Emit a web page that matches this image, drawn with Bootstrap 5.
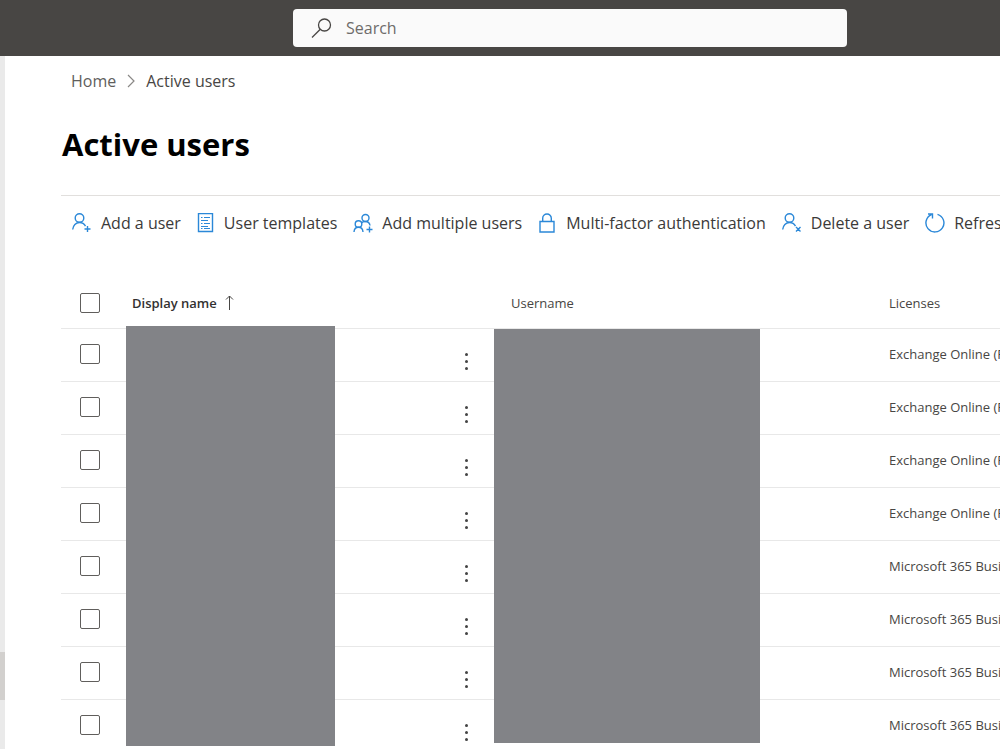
<!DOCTYPE html>
<html lang="en">
<head>
<meta charset="utf-8">
<meta name="viewport" content="width=device-width, initial-scale=1">
<title>Active users</title>
<link href="https://cdn.jsdelivr.net/npm/bootstrap@5.3.0/dist/css/bootstrap.min.css" rel="stylesheet">
<style>
  body { font-family: "Open Sans", "Noto Sans", sans-serif; font-size: 16px; line-height: 24px; color: #484644; background: #fff; }
  .topbar { background: #484644; height: 56px; }
  .search-box { flex: 0 0 554px; height: 38px; background: #fafafa; border-radius: 4px; color: #605e5c; padding: 0 18px; gap: 14px; }
  .search-box input { color: #605e5c; font-size: 16px; }
  .search-box input::placeholder { color: #6e6c6a; }
  .search-lead { flex: 0 1 293px; }
  .side-rail { flex: 0 0 5px; background: #eaeaea; }
  .rail-thumb { height: 48px; margin-top: 596px; background: #d2d0ce; }
  .page { padding: 13px 0 0 56px; min-width: 0; }
  .trail { --bs-breadcrumb-item-padding-x: 0; gap: 10px; padding-left: 10px; margin-bottom: 29px; }
  .trail a { color: #605e5c; }
  .trail .active { color: #484644; }
  .page-title { font-size: 31px; line-height: 44px; font-weight: 700; color: #000; margin: 0 0 29px 1px; }
  .commands { border-top: 1px solid #e1dfdd; padding: 15px 0 0 11px; gap: 16px; height: 79px; }
  .commands button { color: #3b3a39; gap: 9px; white-space: nowrap; }
  .commands svg { stroke: #2b88d8; fill: none; stroke-width: 1.4; flex: none; }
  .users { table-layout: fixed; font-size: 13px; --bs-table-color: #484644; --bs-table-bg: transparent; margin: 0; }
  .users th, .users td { border-color: #e8e8e8; padding: 0; height: 53px; white-space: nowrap; font-weight: 400; vertical-align: middle; }
  .users thead th { height: 54px; padding-top: 4px; }
  .users tbody td { padding-bottom: 2px; }
  .users .pick { width: 71px; padding-left: 19px; }
  .users .who { width: 321px; }
  .users .more { width: 58px; padding-top: 17px; }
  .users .login { width: 378px; }
  .users .form-check-input { width: 20px; height: 20px; margin: 0; border: 1px solid #605e5c; border-radius: 2px; display: block; }
  .sort-btn { font-weight: 600; color: #323130; }
  .more button { width: 28px; height: 28px; }
  .hidden-block { background: #828387; }
  .block-name { left: 65px; top: 52px; width: 209px; height: 420px; }
  .block-login { left: 433px; top: 55px; width: 266px; height: 414px; }
</style>
</head>
<body>
<svg class="d-none" aria-hidden="true">
  <symbol id="dots" viewBox="0 0 28 28"><g fill="#444"><circle cx="13.500" cy="6.500" r="1.500"/><circle cx="13.500" cy="13.500" r="1.500"/><circle cx="13.500" cy="20.500" r="1.500"/></g></symbol>
</svg>
<div class="vh-100 overflow-hidden d-flex flex-column">
  <header class="topbar d-flex align-items-center flex-shrink-0">
    <div class="search-lead"></div>
    <form class="search-box d-flex align-items-center" role="search">
      <svg width="21" height="21" viewBox="0 0 21 21" fill="none" stroke="#484644" stroke-width="1.3" aria-hidden="true"><circle cx="13.5" cy="7" r="6"/><path d="M9.300 11.300 1 19.500"/></svg>
      <input type="text" class="border-0 bg-transparent p-0 flex-grow-1" placeholder="Search" aria-label="Search">
    </form>
  </header>
  <div class="d-flex flex-grow-1">
    <aside class="side-rail"><div class="rail-thumb"></div></aside>
    <main class="page flex-grow-1">
      <nav aria-label="Breadcrumb">
        <ol class="trail list-unstyled d-flex align-items-center">
          <li><a href="#" class="text-decoration-none">Home</a></li>
          <li class="d-flex" aria-hidden="true"><svg width="10" height="14" viewBox="0 0 10 14" fill="none" stroke="#8a8886" stroke-width="1.2"><path d="m2 1 6 6-6 6"/></svg></li>
          <li class="active" aria-current="page">Active users</li>
        </ol>
      </nav>
      <h1 class="page-title">Active users</h1>
      <div class="commands d-flex align-items-start" role="toolbar" aria-label="User actions">
        <button type="button" class="btn p-0 border-0 d-flex align-items-center">
          <svg width="20" height="20" viewBox="0 0 20 20"><circle cx="7.500" cy="5" r="4.300"/><path d="M.7 16.500c.3-4 3.200-7 6.800-7 2.600 0 4.800 1.400 6 3.600M15.500 13v6M12.500 16h6"/></svg>Add a user</button>
        <button type="button" class="btn p-0 border-0 d-flex align-items-center">
          <svg width="18" height="20" viewBox="0 0 18 20"><path d="M1.500.5h14v18h-14z"/><path stroke-width="1.100" d="M4 4.500h1.500M7 4.500h6M4 7.500h7M4 10.500h1.500M7 10.500h6M4 13.500h7M4 15.500h1.500M7 15.500h6"/></svg>User templates</button>
        <button type="button" class="btn p-0 border-0 d-flex align-items-center">
          <svg width="20" height="20" viewBox="0 0 20 20"><circle cx="12.500" cy="5" r="3.500"/><circle cx="5.500" cy="11" r="3.300"/><path d="M1 19c.2-2.800 2-4.700 4.500-4.700S9.800 16.200 10 19M8.300 10c1-1 2.400-1.600 4.200-1.500 2.400.1 4.200 1.500 4.500 4M16.500 13.500v6M13.500 16.500h6"/></svg>Add multiple users</button>
        <button type="button" class="btn p-0 border-0 d-flex align-items-center">
          <svg width="19" height="20" viewBox="0 0 19 20"><path d="M2 8.500h14V19H2zM4.700 8.500V5.300a4.300 4.300 0 0 1 8.600 0v3.200"/></svg>Multi-factor authentication</button>
        <button type="button" class="btn p-0 border-0 d-flex align-items-center">
          <svg width="20" height="20" viewBox="0 0 20 20"><circle cx="7.500" cy="5" r="4.300"/><path d="M.7 16.500c.3-4 3.200-7 6.800-7 2.600 0 4.800 1.400 6 3.600M14 14l4.500 4.500M18.500 14 14 18.500"/></svg>Delete a user</button>
        <button type="button" class="btn p-0 border-0 d-flex align-items-center">
          <svg width="20" height="20" viewBox="0 0 20 20"><path d="M12.500 1.300a9 9 0 1 1-6 .3M3 1h4.500v4.500"/></svg>Refresh</button>
      </div>
      <div class="position-relative">
        <table class="table users">
          <thead><tr>
            <th class="pick"><input class="form-check-input" type="checkbox" aria-label="Select all users"></th>
            <th class="who" aria-sort="ascending"><button type="button" class="sort-btn border-0 bg-transparent p-0 d-flex align-items-center gap-2">Display name <svg width="9" height="15" viewBox="0 0 9 15" fill="none" stroke="#484644" aria-hidden="true"><path d="M4.500 15V1M1 4.500 4.500 1 8 4.500"/></svg></button></th>
            <th class="more"></th>
            <th class="login">Username</th>
            <th>Licenses</th>
          </tr></thead>
          <tbody>
            <tr><td class="pick"><input class="form-check-input" type="checkbox" aria-label="Select user 1"></td><td></td><td class="more"><button type="button" class="border-0 bg-transparent p-0 d-block" aria-label="More actions"><svg class="d-block" width="28" height="28"><use href="#dots"/></svg></button></td><td></td><td>Exchange Online (Plan 1)</td></tr>
            <tr><td class="pick"><input class="form-check-input" type="checkbox" aria-label="Select user 2"></td><td></td><td class="more"><button type="button" class="border-0 bg-transparent p-0 d-block" aria-label="More actions"><svg class="d-block" width="28" height="28"><use href="#dots"/></svg></button></td><td></td><td>Exchange Online (Plan 1)</td></tr>
            <tr><td class="pick"><input class="form-check-input" type="checkbox" aria-label="Select user 3"></td><td></td><td class="more"><button type="button" class="border-0 bg-transparent p-0 d-block" aria-label="More actions"><svg class="d-block" width="28" height="28"><use href="#dots"/></svg></button></td><td></td><td>Exchange Online (Plan 1)</td></tr>
            <tr><td class="pick"><input class="form-check-input" type="checkbox" aria-label="Select user 4"></td><td></td><td class="more"><button type="button" class="border-0 bg-transparent p-0 d-block" aria-label="More actions"><svg class="d-block" width="28" height="28"><use href="#dots"/></svg></button></td><td></td><td>Exchange Online (Plan 1)</td></tr>
            <tr><td class="pick"><input class="form-check-input" type="checkbox" aria-label="Select user 5"></td><td></td><td class="more"><button type="button" class="border-0 bg-transparent p-0 d-block" aria-label="More actions"><svg class="d-block" width="28" height="28"><use href="#dots"/></svg></button></td><td></td><td>Microsoft 365 Business</td></tr>
            <tr><td class="pick"><input class="form-check-input" type="checkbox" aria-label="Select user 6"></td><td></td><td class="more"><button type="button" class="border-0 bg-transparent p-0 d-block" aria-label="More actions"><svg class="d-block" width="28" height="28"><use href="#dots"/></svg></button></td><td></td><td>Microsoft 365 Business</td></tr>
            <tr><td class="pick"><input class="form-check-input" type="checkbox" aria-label="Select user 7"></td><td></td><td class="more"><button type="button" class="border-0 bg-transparent p-0 d-block" aria-label="More actions"><svg class="d-block" width="28" height="28"><use href="#dots"/></svg></button></td><td></td><td>Microsoft 365 Business</td></tr>
            <tr><td class="pick"><input class="form-check-input" type="checkbox" aria-label="Select user 8"></td><td></td><td class="more"><button type="button" class="border-0 bg-transparent p-0 d-block" aria-label="More actions"><svg class="d-block" width="28" height="28"><use href="#dots"/></svg></button></td><td></td><td>Microsoft 365 Business</td></tr>
          </tbody>
        </table>
        <div class="hidden-block block-name position-absolute"></div>
        <div class="hidden-block block-login position-absolute"></div>
      </div>
    </main>
  </div>
</div>
<script src="https://cdn.jsdelivr.net/npm/bootstrap@5.3.0/dist/js/bootstrap.bundle.min.js"></script>
</body>
</html>
